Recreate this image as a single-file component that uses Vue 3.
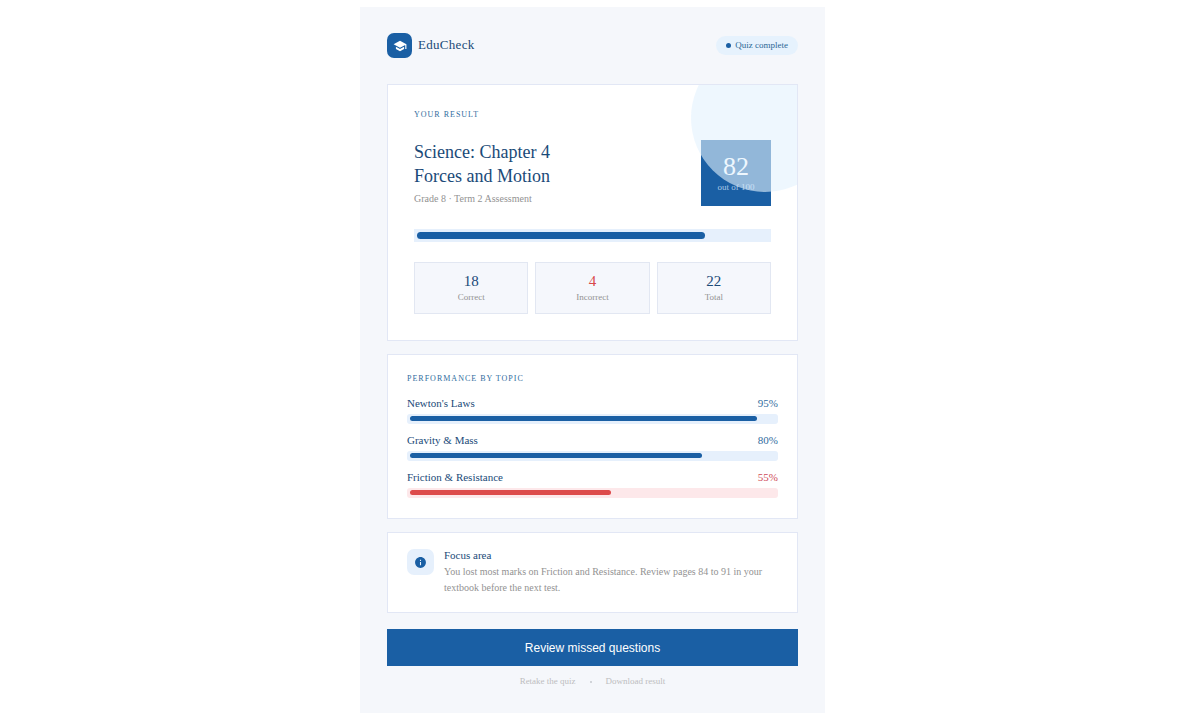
<script setup>
const score = 82

const stats = [
  { value: 18, label: 'Correct' },
  { value: 4, label: 'Incorrect', bad: true },
  { value: 22, label: 'Total' },
]

const topics = [
  { name: "Newton's Laws", percent: 95 },
  { name: 'Gravity & Mass', percent: 80 },
  { name: 'Friction & Resistance', percent: 55, bad: true },
]
</script>

<template>
  <main class="page">
    <header class="header">
      <div class="brand">
        <span class="logo">
          <svg viewBox="0 0 24 24" aria-hidden="true">
            <path d="M5 13.18v4L12 21l7-3.82v-4L12 17l-7-3.82zM12 3 1 9l11 6 9-4.91V17h2V9L12 3z" />
          </svg>
        </span>
        <span class="brand-name">EduCheck</span>
      </div>
      <span class="badge"><i class="badge-dot"></i>Quiz complete</span>
    </header>

    <section class="card result">
      <p class="eyebrow">YOUR RESULT</p>
      <div class="summary">
        <div>
          <h1 class="title">Science: Chapter 4<br />Forces and Motion</h1>
          <p class="subtitle">Grade 8 · Term 2 Assessment</p>
        </div>
        <div class="score">
          <span class="score-value">{{ score }}</span>
          <span class="score-label">out of 100</span>
        </div>
      </div>
      <div class="track" role="progressbar" aria-label="Score" :aria-valuenow="score">
        <div class="fill" :style="{ width: score + '%' }"></div>
      </div>
      <div class="stats">
        <div v-for="s in stats" :key="s.label" class="stat" :class="{ bad: s.bad }">
          <span class="stat-value">{{ s.value }}</span>
          <span class="stat-label">{{ s.label }}</span>
        </div>
      </div>
    </section>

    <section class="card performance">
      <h2 class="eyebrow topics-heading">PERFORMANCE BY TOPIC</h2>
      <div class="topics">
        <div v-for="t in topics" :key="t.name" class="topic" :class="{ bad: t.bad }">
          <div class="topic-head">
            <span>{{ t.name }}</span>
            <span class="topic-percent">{{ t.percent }}%</span>
          </div>
          <div class="topic-track" role="progressbar" :aria-label="t.name" :aria-valuenow="t.percent">
            <div class="topic-fill" :style="{ width: t.percent + '%' }"></div>
          </div>
        </div>
      </div>
    </section>

    <section class="card focus">
      <span class="focus-icon">
        <svg viewBox="0 0 24 24" aria-hidden="true">
          <path d="M12 2C6.480 2 2 6.480 2 12s4.480 10 10 10 10-4.480 10-10S17.520 2 12 2zm1 15h-2v-6h2v6zm0-8h-2V7h2v2z" />
        </svg>
      </span>
      <div>
        <h2 class="focus-title">Focus area</h2>
        <p class="focus-text">
          You lost most marks on Friction and Resistance. Review pages 84 to 91 in your textbook before the next test.
        </p>
      </div>
    </section>

    <button class="review" type="button">Review missed questions</button>

    <nav class="links">
      <a href="#retake">Retake the quiz</a>
      <i class="links-dot"></i>
      <a href="#download">Download result</a>
    </nav>
  </main>
</template>

<style>
body {
  background: #fff;
}
</style>

<style scoped>
.page {
  box-sizing: border-box;
  max-width: 465px;
  margin: 7px auto;
  padding: 26px 27px;
  background: #f5f7fb;
  color: #1a4a78;
  font-family: 'Liberation Serif', 'Times New Roman', serif;
}

h1,
h2,
p {
  margin: 0;
  font-weight: 400;
}

.header {
  display: flex;
  align-items: center;
  justify-content: space-between;
  margin-bottom: 26px;
}

.brand {
  display: flex;
  align-items: center;
  gap: 6px;
}

.logo {
  display: flex;
  align-items: center;
  justify-content: center;
  width: 25px;
  height: 25px;
  border-radius: 7px;
  background: #1a5fa4;
}

.logo svg {
  width: 14px;
  height: 14px;
  fill: #fff;
}

.brand-name {
  padding-bottom: 2px;
  font-size: 13px;
  line-height: 16px;
  letter-spacing: 0.3px;
}

.badge {
  display: flex;
  align-items: center;
  gap: 4px;
  padding: 4px 10px;
  border-radius: 10px;
  background: #e6f2fd;
  color: #2a6795;
  font-size: 9px;
  line-height: 11px;
}

.badge-dot {
  width: 5px;
  height: 5px;
  border-radius: 50%;
  background: #1a5fa4;
}

.card {
  border: 1px solid #e2e7f5;
  background: #fff;
}

.result {
  position: relative;
  overflow: hidden;
  padding: 26px;
}

/* Translucent disc over the top right corner */
.result::after {
  content: '';
  position: absolute;
  top: -41px;
  right: -42px;
  width: 148px;
  height: 148px;
  border-radius: 50%;
  background: #e3f2fd;
  opacity: 0.6;
  pointer-events: none;
}

.eyebrow {
  margin-bottom: 21px;
  color: #2f6c9e;
  font-size: 8px;
  line-height: 8px;
  letter-spacing: 1px;
}

.topics-heading {
  margin-bottom: 14px;
}

.summary {
  display: flex;
  align-items: flex-start;
  justify-content: space-between;
  margin-bottom: 23px;
}

.title {
  font-size: 18px;
  line-height: 24px;
}

.subtitle {
  margin-top: 5px;
  color: #929292;
  font-size: 10px;
  line-height: 12px;
}

.score {
  display: flex;
  flex-direction: column;
  align-items: center;
  box-sizing: border-box;
  width: 70px;
  height: 66px;
  padding-top: 13px;
  background: #1a5fa4;
  color: #fff;
}

.score-value {
  font-size: 26px;
  line-height: 28px;
}

.score-label {
  margin-top: 1px;
  color: #a9c8e6;
  font-size: 9px;
  line-height: 11px;
}

.track {
  margin-bottom: 20px;
  padding: 3px;
  background: #e6f0fc;
}

.fill {
  height: 7px;
  border-radius: 4px;
  background: #1a5fa4;
}

.stats {
  display: grid;
  grid-template-columns: repeat(3, 1fr);
  gap: 7px;
}

.stat {
  display: flex;
  flex-direction: column;
  align-items: center;
  gap: 2px;
  padding: 10px;
  border: 1px solid #e2e7f2;
  background: #f5f7fc;
}

.stat-value {
  font-size: 15px;
  line-height: 17px;
}

.stat.bad .stat-value {
  color: #d9484a;
}

.stat-label {
  color: #929292;
  font-size: 9px;
  line-height: 11px;
}

.performance {
  margin-top: 13px;
  padding: 20px 19px;
}

.topics {
  display: grid;
  gap: 10px;
}

.topic-head {
  display: flex;
  justify-content: space-between;
  margin-bottom: 4px;
  font-size: 11px;
  line-height: 13px;
}

.topic-percent {
  color: #2f6c9e;
}

.topic.bad .topic-percent {
  color: #cf4a58;
}

.topic-track {
  padding: 2px 3px 3px;
  border-radius: 3px;
  background: #e6f0fc;
}

.topic-fill {
  height: 5px;
  border-radius: 3px;
  background: #1a5fa4;
}

.topic.bad .topic-track {
  background: #fde8ea;
}

.topic.bad .topic-fill {
  background: #dd4b4b;
}

.focus {
  display: flex;
  align-items: flex-start;
  gap: 10px;
  margin-top: 13px;
  padding: 16px 19px;
}

.focus-icon {
  display: flex;
  flex: none;
  align-items: center;
  justify-content: center;
  width: 27px;
  height: 26px;
  border-radius: 7px;
  background: #e6f0fc;
}

.focus-icon svg {
  width: 13px;
  height: 13px;
  fill: #1a5fa4;
}

.focus-title {
  margin-bottom: 2px;
  font-size: 11px;
  line-height: 13px;
}

.focus-text {
  color: #929292;
  font-size: 10px;
  line-height: 16px;
}

.review {
  display: block;
  width: 100%;
  margin-top: 16px;
  padding: 12px 10px 10px;
  border: 0;
  background: #1a5fa4;
  color: #fff;
  font-family: 'Liberation Sans', Arial, sans-serif;
  font-size: 12px;
  line-height: 15px;
}

.links {
  display: flex;
  align-items: center;
  justify-content: center;
  gap: 14px;
  margin-top: 10px;
  font-size: 9px;
  line-height: 11px;
}

.links a {
  color: #bdbdc0;
  text-decoration: none;
}

.links-dot {
  width: 2px;
  height: 2px;
  border-radius: 50%;
  background: #c4c8ce;
}
</style>
